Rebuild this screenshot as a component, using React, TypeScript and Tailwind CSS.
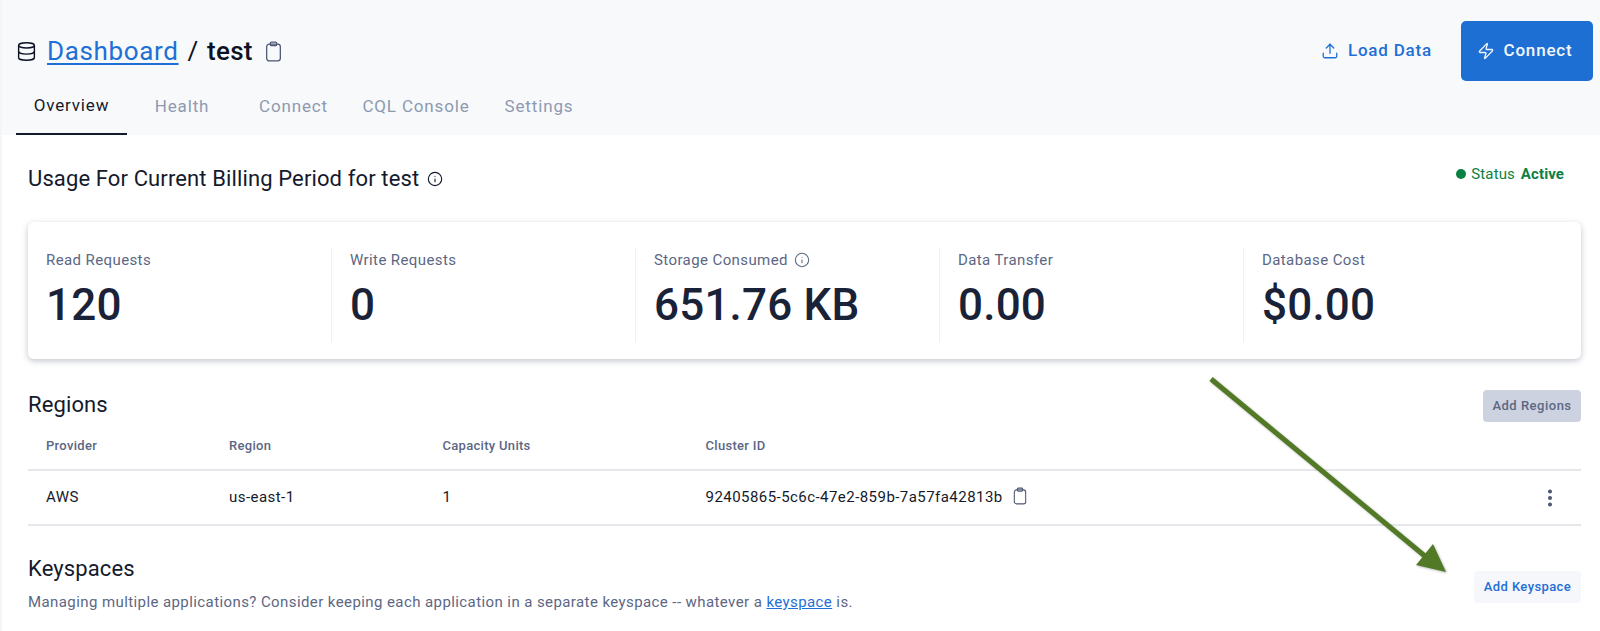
import { Database, Info, MoreVertical, Upload, Zap } from "lucide-react";

const tabs = [
  { label: "Overview", width: "w-[111px]", active: true },
  { label: "Health", width: "w-[110px]", active: false },
  { label: "Connect", width: "w-[113px]", active: false },
  { label: "CQL Console", width: "w-[132px]", active: false },
  { label: "Settings", width: "w-[114px]", active: false },
];

const stats = [
  { label: "Read Requests", value: "120" },
  { label: "Write Requests", value: "0" },
  { label: "Storage Consumed", value: "651.76 KB", info: true },
  { label: "Data Transfer", value: "0.00" },
  { label: "Database Cost", value: "$0.00" },
];

function ClipboardIcon({ className }: { className: string }) {
  return (
    <svg viewBox="0 0 16 20" fill="none" stroke="currentColor" strokeWidth="1.2" className={className}>
      <rect x="1.5" y="3" width="13" height="16" rx="2.5" />
      <rect x="5" y="1" width="6" height="3.5" rx="1" />
    </svg>
  );
}

export default function App() {
  return (
    <div className="relative h-[631px] overflow-hidden border-l-2 border-[#f4f5f8] bg-white font-['Roboto',sans-serif] text-[#1a2238]">
      {/* Header */}

      <header className="h-[135px] bg-[#f8f9fb]">
        <div className="flex h-[82px] items-start justify-between pt-[21px] pr-[7px] pl-[14px]">
          <div className="flex h-[60px] items-center text-[26px] leading-none tracking-[0.65px] text-[#0c1222]">
            <Database className="h-[21px] w-[21px]" strokeWidth={1.6} />
            <a href="#" className="ml-[10px] font-normal text-[#1e6fd6] underline underline-offset-[3px]">
              Dashboard
            </a>
            <span className="ml-[9px]">/</span>
            <span className="ml-[8px] font-medium tracking-[0.3px]">test</span>
            <ClipboardIcon className="ml-[12px] h-[21px] w-[17px] text-[#4c5672]" />
          </div>

          <div className="flex items-center">
            <button className="flex h-[60px] items-center gap-[9px] text-[17px] font-medium tracking-[0.8px] text-[#1e6fd6]">
              <Upload className="h-[18px] w-[18px]" strokeWidth={1.7} />
              Load Data
            </button>

            <button className="ml-[29px] flex h-[60px] w-[132px] items-center justify-center gap-[9px] rounded-[5px] bg-[#1e6fd4] pr-[5px] text-[17px] font-medium tracking-[0.8px] text-[#f4f7fc]">
              <Zap className="h-[18px] w-[18px]" strokeWidth={1.7} />
              Connect
            </button>
          </div>
        </div>

        <nav className="flex h-[53px] pl-[14px]">
          {tabs.map((tab) => (
            <div
              key={tab.label}
              className={`flex items-center justify-center pb-[4px] text-[17px] tracking-[0.85px] ${tab.width} ${
                tab.active ? "border-b-2 border-[#141a2c] text-[#141a2c]" : "text-[#8e99b1]"
              }`}
            >
              {tab.label}
            </div>
          ))}
        </nav>
      </header>

      <main className="pr-[19px] pl-[26px]">
        {/* Usage */}

        <div className="flex h-[87px] items-start justify-between">
          <h2 className="mt-[31px] flex items-center gap-2 text-[22px] leading-[26px] tracking-[0.12px] text-[#141a2c]">
            Usage For Current Billing Period for test
            <Info className="h-4 w-4" strokeWidth={1.7} />
          </h2>

          <div className="mt-[29px] mr-[17px] flex items-center text-[15px] leading-5 tracking-[0.1px] text-[#0b8043]">
            <span className="h-[10px] w-[10px] rounded-full bg-[#0b8043]" />
            <span className="ml-[5px]">Status</span>
            <span className="ml-[6px] font-bold">Active</span>
          </div>
        </div>

        {/* Stats */}

        <section className="grid h-[137px] grid-cols-5 rounded-md bg-white pt-[26px] pr-[33px] shadow-[0_2px_6px_rgba(40,50,80,0.28)]">
          {stats.map((stat, i) => (
            <div
              key={stat.label}
              className={`h-[94px] pl-[18px] ${i < 4 ? "border-r border-[#f0f1f4]" : ""}`}
            >
              <div className="flex items-center gap-[6px] text-[15px] leading-[24px] tracking-[0.4px] text-[#5c6784]">
                {stat.label}
                {stat.info && <Info className="h-4 w-4" strokeWidth={1.6} />}
              </div>

              <div className="mt-[6px] text-[44px] leading-[54px] font-medium tracking-[0.2px] text-[#1a2238]">
                {stat.value}
              </div>
            </div>
          ))}
        </section>

        {/* Regions */}

        <div className="mt-[31px] flex h-[32px] items-center justify-between">
          <h2 className="mb-[3px] text-[22px] leading-[26px] tracking-[0.12px] text-[#141a2c]">Regions</h2>

          <button className="h-[32px] w-[98px] rounded-[4px] bg-[#ccd2df] text-[13px] font-medium tracking-[0.5px] text-[#5c6784]">
            Add Regions
          </button>
        </div>

        <div className="mt-[3px] grid h-[46px] grid-cols-[183px_213.5px_263px_1fr] items-center border-b-2 border-[#e6e7ea] pb-[2px] pl-[18px] text-[13px] font-medium tracking-[0.3px] text-[#5c6784]">
          <span>Provider</span>
          <span>Region</span>
          <span>Capacity Units</span>
          <span>Cluster ID</span>
        </div>

        <div className="grid h-[55px] grid-cols-[183px_213.5px_263px_1fr] items-center border-b-2 border-[#e6e7ea] pl-[18px] text-[15px] tracking-[0.45px] text-[#141a2c]">
          <span>AWS</span>
          <span>us-east-1</span>
          <span>1</span>
          <div className="flex items-center justify-between pr-[20px]">
            <span className="flex items-center gap-[10px]">
              92405865-5c6c-47e2-859b-7a57fa42813b
              <ClipboardIcon className="mb-[3px] h-[18px] w-[14px] text-[#4c5672]" />
            </span>
            <MoreVertical className="h-[22px] w-[22px] text-[#4c5672]" strokeWidth={2.4} />
          </div>
        </div>

        {/* Keyspaces */}

        <div className="mt-[29px] flex items-center justify-between">
          <div>
            <h2 className="text-[22px] leading-[28px] tracking-[0.12px] text-[#141a2c]">Keyspaces</h2>
            <p className="mt-[9px] text-[15px] leading-5 tracking-[0.41px] text-[#5c6784]">
              Managing multiple applications? Consider keeping each application in a separate keyspace -- whatever a{" "}
              <a href="#" className="text-[#1e6fd6] underline">
                keyspace
              </a>{" "}
              is.
            </p>
          </div>

          <button className="mt-[7px] h-[32px] w-[107px] rounded-[4px] bg-[#f6f7fa] text-[13px] font-medium tracking-[0.4px] text-[#1e6fd6]">
            Add Keyspace
          </button>
        </div>
      </main>

      {/* Annotation arrow over the page */}

      <svg className="pointer-events-none absolute top-0 left-[-2px] h-[631px] w-[1600px]" viewBox="0 0 1600 631">
        <g className="drop-shadow-[1px_1px_1px_rgba(0,0,0,0.3)]">
          <line x1="1211" y1="379" x2="1426" y2="557" stroke="#527a26" strokeWidth="5" />
          <polygon points="1446,572 1433,544 1416,565" fill="#527a26" />
        </g>
      </svg>
    </div>
  );
}
